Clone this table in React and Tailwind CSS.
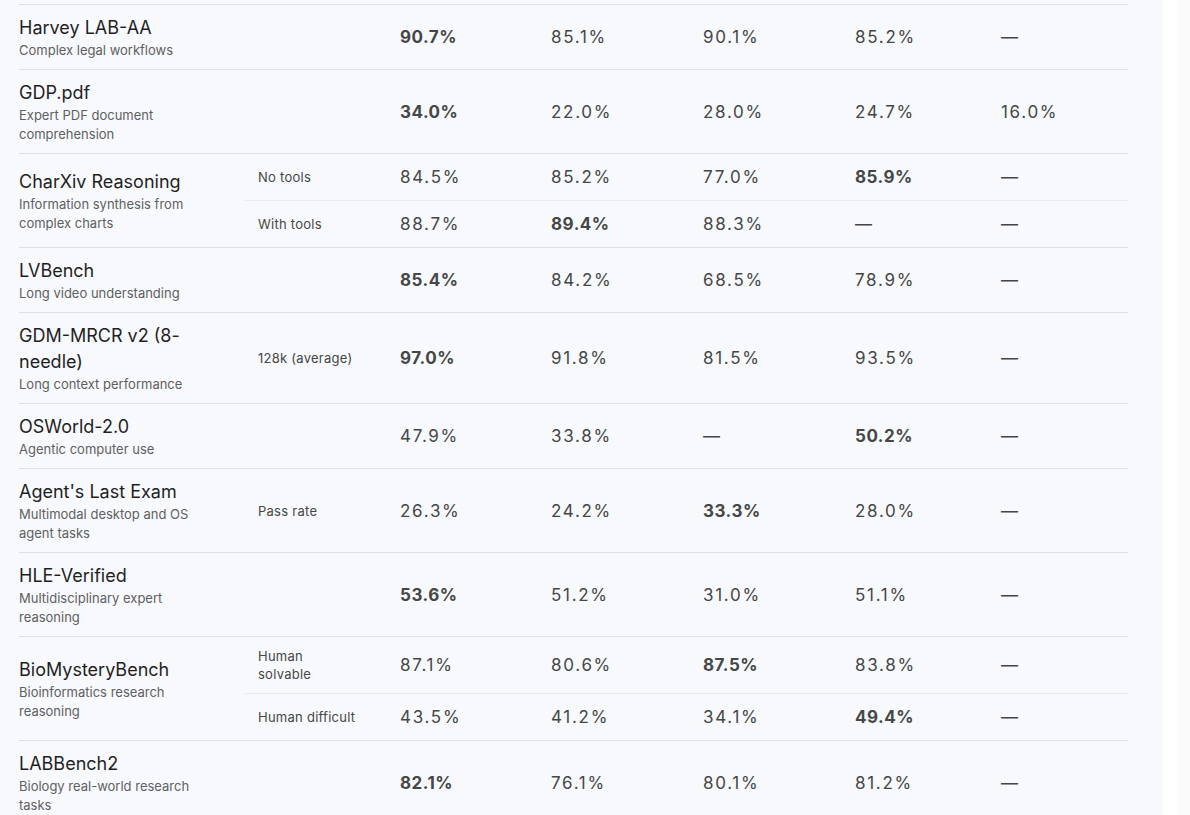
const ROWS = [
  {
    name: "Harvey LAB-AA",
    desc: "Complex legal workflows",
    subs: [{ label: "", values: ["90.7%", "85.1%", "90.1%", "85.2%", "—"], best: 0 }],
  },
  {
    name: "GDP.pdf",
    desc: "Expert PDF document comprehension",
    subs: [{ label: "", values: ["34.0%", "22.0%", "28.0%", "24.7%", "16.0%"], best: 0 }],
  },
  {
    name: "CharXiv Reasoning",
    desc: "Information synthesis from complex charts",
    subs: [
      { label: "No tools", values: ["84.5%", "85.2%", "77.0%", "85.9%", "—"], best: 3 },
      { label: "With tools", values: ["88.7%", "89.4%", "88.3%", "—", "—"], best: 1 },
    ],
  },
  {
    name: "LVBench",
    desc: "Long video understanding",
    subs: [{ label: "", values: ["85.4%", "84.2%", "68.5%", "78.9%", "—"], best: 0 }],
  },
  {
    name: "GDM-MRCR v2 (8-needle)",
    desc: "Long context performance",
    subs: [{ label: "128k (average)", values: ["97.0%", "91.8%", "81.5%", "93.5%", "—"], best: 0 }],
  },
  {
    name: "OSWorld-2.0",
    desc: "Agentic computer use",
    subs: [{ label: "", values: ["47.9%", "33.8%", "—", "50.2%", "—"], best: 3 }],
  },
  {
    name: "Agent's Last Exam",
    desc: "Multimodal desktop and OS agent tasks",
    subs: [{ label: "Pass rate", values: ["26.3%", "24.2%", "33.3%", "28.0%", "—"], best: 2 }],
  },
  {
    name: "HLE-Verified",
    desc: "Multidisciplinary expert reasoning",
    subs: [{ label: "", values: ["53.6%", "51.2%", "31.0%", "51.1%", "—"], best: 0 }],
  },
  {
    name: "BioMysteryBench",
    desc: "Bioinformatics research reasoning",
    subs: [
      { label: ["Human", "solvable"], values: ["87.1%", "80.6%", "87.5%", "83.8%", "—"], best: 2 },
      { label: "Human difficult", values: ["43.5%", "41.2%", "34.1%", "49.4%", "—"], best: 3 },
    ],
  },
  {
    name: "LABBench2",
    desc: "Biology real-world research tasks",
    subs: [{ label: "", values: ["82.1%", "76.1%", "80.1%", "81.2%", "—"], best: 0 }],
  },
];

const font = { fontFamily: "Inter, 'Noto Sans', sans-serif" };

function SubLabel({ label }) {
  if (Array.isArray(label)) {
    return (
      <>
        {label[0]}
        <br />
        {label[1]}
      </>
    );
  }
  return label;
}

function BenchRow({ row }) {
  return row.subs.map((sub, i) => {
    const divider = i === 0 ? "border-t border-[#dde0e6]" : "border-t border-[#e8eaee]";
    return (
      <tr key={i}>
        {i === 0 && (
          <td
            rowSpan={row.subs.length}
            className="border-t border-[#dde0e6] pt-[10px] pb-[9px] pr-[26px] align-middle"
          >
            <div className="text-[18px] leading-[26px] text-[#1f1f1f]">{row.name}</div>
            <div className="text-[13px] leading-[19px] text-[#5e5f62]">{row.desc}</div>
          </td>
        )}
        <td className={`${divider} pl-[13px] py-[10px] align-middle text-[13px] leading-[18px] tracking-[0.02em] text-[#444746]`}>
          <SubLabel label={sub.label} />
        </td>
        {sub.values.map((v, j) => (
          <td
            key={j}
            className={`${divider} pl-[13px] py-[10px] align-middle text-[17px] leading-[26px] text-[#444746] ${
              j === sub.best ? "font-bold tracking-[0.03em]" : "tracking-[0.1em]"
            }`}
          >
            {v}
          </td>
        ))}
      </tr>
    );
  });
}

export default function App() {
  return (
    <div className="flex h-[815px] overflow-hidden bg-white" style={font}>
      <div className="w-[1163px] shrink-0 bg-[#f8f9fc] pl-[19px] pr-[35px] pt-[4px]">
        <table className="w-[1109px] table-fixed border-collapse">
          <colgroup>
            <col className="w-[226px]" />
            <col className="w-[142px]" />
            <col className="w-[151px]" />
            <col className="w-[152px]" />
            <col className="w-[152px]" />
            <col className="w-[146px]" />
            <col className="w-[140px]" />
          </colgroup>
          <tbody>
            {ROWS.map((row) => (
              <BenchRow key={row.name} row={row} />
            ))}
          </tbody>
        </table>
      </div>
      <div className="flex flex-1">
        <div className="w-[14px] bg-white" />
        <div className="flex-1 bg-[#fbfbfb]" />
      </div>
    </div>
  );
}
